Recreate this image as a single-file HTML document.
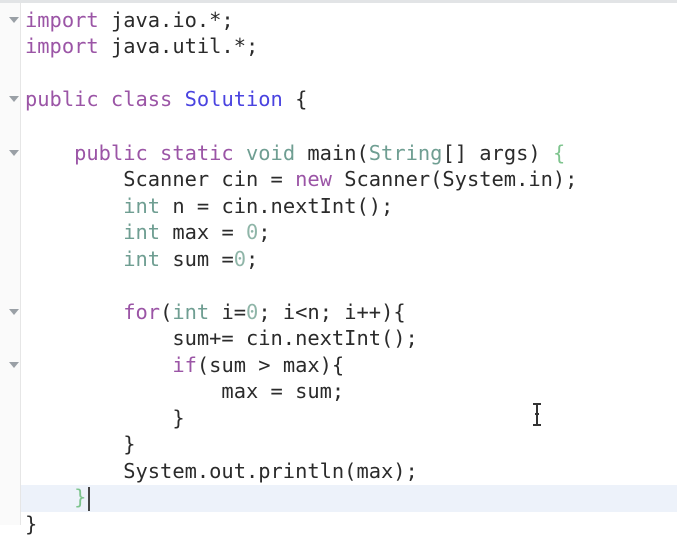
<!DOCTYPE html>
<html><head><meta charset="utf-8"><style>
html,body{margin:0;padding:0;}
body{width:677px;height:525px;overflow:hidden;background:#fff;position:relative;font-family:"DejaVu Sans Mono","Liberation Mono",monospace;font-size:20.4px;color:#2b2b2b;}
.top{position:absolute;left:0;top:0;width:677px;height:3px;background:#e2e4e6;}
.gut{position:absolute;left:0;top:3px;width:20px;height:522px;background:#fafafa;border-right:1px solid #e6e6e6;}
.hl{position:absolute;left:21px;top:485px;width:656px;height:27px;background:#edf2fa;}
.l{position:absolute;left:25px;height:26px;line-height:26px;white-space:pre;}
.k{color:#9b55a6}.t{color:#6f9e92}.c{color:#4a43e0}.n{color:#8fb5a8}.g{color:#7ec48e}
.f{position:absolute;left:9px;width:0;height:0;border-left:5px solid transparent;border-right:5px solid transparent;border-top:6px solid #9aa0a6;}
.cur{position:absolute;left:88px;top:487px;width:2px;height:24px;background:#444;}
</style></head><body>
<div class="top"></div><div class="gut"></div><div class="hl"></div>
<div class="f" style="top:17px"></div>
<div class="f" style="top:96px"></div>
<div class="f" style="top:150px"></div>
<div class="f" style="top:309px"></div>
<div class="f" style="top:362px"></div>
<div class="l" style="top:7px"><span class="k">import</span> java.io.*;</div>
<div class="l" style="top:33px"><span class="k">import</span> java.util.*;</div>
<div class="l" style="top:86px"><span class="k">public class</span> <span class="c">Solution</span> {</div>
<div class="l" style="top:140px">    <span class="k">public static</span> <span class="t">void</span> main(<span class="t">String</span>[] args) <span class="g">{</span></div>
<div class="l" style="top:166px">        Scanner cin = <span class="k">new</span> Scanner(System.in);</div>
<div class="l" style="top:193px">        <span class="t">int</span> n = cin.nextInt();</div>
<div class="l" style="top:219px">        <span class="t">int</span> max = <span class="n">0</span>;</div>
<div class="l" style="top:246px">        <span class="t">int</span> sum =<span class="n">0</span>;</div>
<div class="l" style="top:299px">        <span class="k">for</span>(<span class="t">int</span> i=<span class="n">0</span>; i&lt;n; i++){</div>
<div class="l" style="top:325px">            sum+= cin.nextInt();</div>
<div class="l" style="top:352px">            <span class="k">if</span>(sum &gt; max){</div>
<div class="l" style="top:378px">                max = sum;</div>
<div class="l" style="top:405px">            }</div>
<div class="l" style="top:431px">        }</div>
<div class="l" style="top:458px">        System.out.println(max);</div>
<div class="l" style="top:484px">    <span class="g">}</span></div>
<div class="l" style="top:511px">}</div>
<div class="cur"></div>
<svg style="position:absolute;left:530px;top:402px" width="14" height="26" viewBox="0 0 14 26"><path d="M3 2h8M7 2v21M3 23h8M5 12h4" stroke="#333" stroke-width="2" fill="none"/></svg>
</body></html>
